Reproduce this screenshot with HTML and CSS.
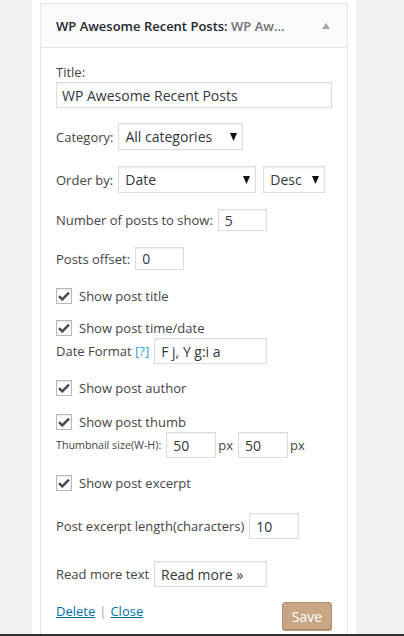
FILE: index.html
```html
<!DOCTYPE html>
<html>
<head>
<meta charset="utf-8">
<link rel="stylesheet" href="styles.css">
</head>
<body>
<div class="page">
  <div class="gutter"></div>
  <div class="column">
    <div class="widget">
      <div class="widget-top">
        <h3 class="widget-title">WP Awesome Recent Posts:<span class="in-title"> WP Aw...</span></h3>
        <svg class="toggle" width="8" height="6" viewBox="0 0 8 6"><polygon points="4,0 8,6 0,6" fill="#a0a5aa"/></svg>
      </div>
      <div class="widget-inside">
        <div class="label-line mt-title">Title:</div>
        <div class="input full h26">WP Awesome Recent Posts</div>

        <div class="row mt-cat">
          <span class="lbl">Category:</span>
          <div class="select w-cat h27"><span>All categories</span><svg class="arrow" width="7" height="8" viewBox="0 0 7 8"><polygon points="0,0 7,0 3.5,8" fill="#111"/></svg></div>
        </div>

        <div class="row mt-order">
          <span class="lbl">Order by:</span>
          <div class="select w-date h27"><span>Date</span><svg class="arrow" width="7" height="8" viewBox="0 0 7 8"><polygon points="0,0 7,0 3.5,8" fill="#111"/></svg></div>
          <div class="select w-desc h27 gap-desc"><span>Desc</span><svg class="arrow" width="7" height="8" viewBox="0 0 7 8"><polygon points="0,0 7,0 3.5,8" fill="#111"/></svg></div>
        </div>

        <div class="row mt-num">
          <span class="lbl">Number of posts to show:</span>
          <div class="input w49 h22">5</div>
        </div>

        <div class="row mt-offset">
          <span class="lbl">Posts offset:</span>
          <div class="input w49 h23">0</div>
        </div>

        <div class="check-row mt-cb1">
          <span class="checkbox"><svg width="12" height="10" viewBox="0 0 12 10"><path d="M1 5.2 L4.3 8.4 L11 1.6" fill="none" stroke="#4a4a4a" stroke-width="2.5"/></svg></span>
          <span class="cb-label">Show post title</span>
        </div>

        <div class="check-row mt-cb2">
          <span class="checkbox"><svg width="12" height="10" viewBox="0 0 12 10"><path d="M1 5.2 L4.3 8.4 L11 1.6" fill="none" stroke="#4a4a4a" stroke-width="2.5"/></svg></span>
          <span class="cb-label">Show post time/date</span>
        </div>

        <div class="row mt-date">
          <span class="lbl">Date Format <a class="help">[?]</a></span>
          <div class="input w113 h26">F j, Y g:i a</div>
        </div>

        <div class="check-row mt-cb3">
          <span class="checkbox"><svg width="12" height="10" viewBox="0 0 12 10"><path d="M1 5.2 L4.3 8.4 L11 1.6" fill="none" stroke="#4a4a4a" stroke-width="2.5"/></svg></span>
          <span class="cb-label">Show post author</span>
        </div>

        <div class="check-row mt-cb4">
          <span class="checkbox"><svg width="12" height="10" viewBox="0 0 12 10"><path d="M1 5.2 L4.3 8.4 L11 1.6" fill="none" stroke="#4a4a4a" stroke-width="2.5"/></svg></span>
          <span class="cb-label">Show post thumb</span>
        </div>

        <div class="row mt-thumb">
          <span class="lbl small">Thumbnail size(W-H):</span>
          <div class="input w50 h26">50</div>
          <span class="px">px</span>
          <div class="input w50 h26">50</div>
          <span class="px">px</span>
        </div>

        <div class="check-row mt-cb5">
          <span class="checkbox"><svg width="12" height="10" viewBox="0 0 12 10"><path d="M1 5.2 L4.3 8.4 L11 1.6" fill="none" stroke="#4a4a4a" stroke-width="2.5"/></svg></span>
          <span class="cb-label">Show post excerpt</span>
        </div>

        <div class="row mt-excerpt">
          <span class="lbl">Post excerpt length(characters)</span>
          <div class="input w50 h26">10</div>
        </div>

        <div class="row mt-more">
          <span class="lbl">Read more text</span>
          <div class="input w113 h26 big">Read more »</div>
        </div>

        <div class="footer">
          <div class="links"><a class="link">Delete</a><span class="sep">|</span><a class="link">Close</a></div>
          <div class="save">Save</div>
        </div>
      </div>
    </div>
  </div>
  <div class="gutter-right"></div>
</div>
<div class="bottom-strip"></div>
</body>
</html>
```

FILE: styles.css
```css
* { box-sizing: border-box; }
html, body { margin: 0; padding: 0; }
body {
  background: #f1f1f1;
  font-family: "Open Sans", "Liberation Sans", sans-serif;
  font-size: 13px;
  color: #444;
  width: 404px;
  height: 636px;
  overflow: hidden;
}
.page {
  display: flex;
  height: 634px;
}
.gutter { width: 32px; background: #f1f1f1; }
.gutter-right { flex: 1; background: #f1f1f1; }
.column {
  width: 324px;
  background: #fff;
  padding: 3px 8px 0 8px;
}
.widget {
  border: 1px solid #e5e5e5;
  border-bottom: none;
  height: 100%;
  background: #fff;
}
.widget-top {
  height: 44px;
  background: #fafafa;
  border-bottom: 1px solid #e5e5e5;
  display: flex;
  align-items: center;
  justify-content: space-between;
  padding: 0 17px 0 15px;
}
.widget-title {
  margin: 0;
  font-size: 13px;
  font-weight: 600;
  color: #23282d;
  white-space: nowrap;
}
.in-title { color: #6c7176; }
.toggle { display: block; margin-top: 1px; }
.widget-inside {
  padding: 0 15px;
}
.label-line { height: 18px; line-height: 18px; }
.row {
  display: flex;
  align-items: center;
  gap: 5px;
}
.lbl { white-space: nowrap; }
.lbl.small { font-size: 10.7px; }
.help { color: #2ea2cc; }
.input, .select {
  border: 1px solid #ddd;
  box-shadow: inset 0 1px 2px rgba(0,0,0,0.07);
  background: #fff;
  color: #32373c;
  font-size: 14px;
  padding: 0 6px;
  display: flex;
  align-items: center;
  white-space: nowrap;
}
.input.full { width: 100%; padding-left: 5px; }
.select { justify-content: space-between; padding-right: 5px; }
.arrow { display: block; }
.h22 { height: 22px; }
.h23 { height: 23px; }
.h26 { height: 26px; }
.h27 { height: 27px; }
.w49 { width: 49px; }
.w50 { width: 50px; }
.w113 { width: 113px; }
.w-cat { width: 125px; }
.w-date { width: 138px; }
.w-desc { width: 62px; }
.gap-desc { margin-left: 2px; }
.px { font-size: 13px; margin-left: -3px; }
.check-row {
  display: flex;
  align-items: center;
  gap: 7px;
  height: 16px;
}
.checkbox {
  width: 16px;
  height: 16px;
  border: 1px solid #b4b9be;
  box-shadow: inset 0 1px 2px rgba(0,0,0,0.1);
  background: #fff;
  display: flex;
  align-items: center;
  justify-content: center;
}
.checkbox svg { display: block; }
.cb-label { line-height: 16px; }
.mt-title { margin-top: 15px; }
.label-line + .input { margin-top: 1px; }
.mt-cat { margin-top: 15px; }
.mt-order { margin-top: 16px; }
.mt-num { margin-top: 16px; }
.mt-offset { margin-top: 16px; }
.mt-cb1 { margin-top: 18px; }
.mt-cb2 { margin-top: 16px; }
.mt-date { margin-top: 2px; }
.mt-cb3 { margin-top: 16px; }
.mt-cb4 { margin-top: 18px; }
.mt-thumb { margin-top: 2px; }
.mt-cb5 { margin-top: 17px; }
.mt-excerpt { margin-top: 22px; }
.mt-more { margin-top: 22px; }
.footer {
  margin-top: 15px;
  display: flex;
  justify-content: space-between;
  align-items: flex-start;
}
.links { line-height: 17px; padding-top: 1px; }
.link { color: #0073aa; text-decoration: underline; }
.sep { color: #a0a5aa; margin: 0 4px; }
.save {
  width: 50px;
  height: 28px;
  background: #c8a585;
  border: 1px solid #b08d6c;
  border-radius: 3px;
  color: #fff;
  font-size: 14px;
  display: flex;
  align-items: center;
  justify-content: center;
  box-shadow: 0 1px 0 #b99777;
}
.bottom-strip { height: 2px; background: #2e332e; }
```
